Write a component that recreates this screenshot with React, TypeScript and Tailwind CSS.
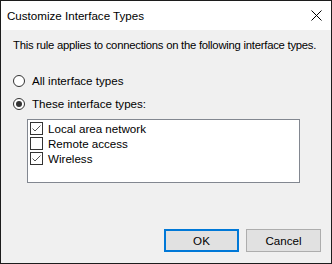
import React from 'react'

const font = { fontFamily: '"Liberation Sans", Arial, sans-serif' }

const items = [
  { label: 'Local area network', checked: true },
  { label: 'Remote access', checked: false },
  { label: 'Wireless', checked: true },
]

const Radio = ({ selected, label }: { selected?: boolean; label: string }) => (
  <div className="flex items-center h-[16px]">
    <span className="ml-[12px] w-[12px] h-[12px] rounded-full border border-[#333333] bg-white flex items-center justify-center">
      {selected && <span className="w-[6px] h-[6px] rounded-full bg-[#333333]" />}
    </span>
    <span className="ml-[7px]">{label}</span>
  </div>
)

const CheckRow = ({ checked, label }: { checked: boolean; label: string }) => (
  <div className="flex items-center h-[15px]">
    <span className="w-[13px] h-[13px] border border-[#333333] bg-white flex items-center justify-center">
      {checked && (
        <svg width="11" height="11" viewBox="0 0 11 11">
          <path d="M1.5 5.5 L4 8 L9.5 2.5" fill="none" stroke="#555" strokeWidth="1" />
        </svg>
      )}
    </span>
    <span className="ml-[5px]">{label}</span>
  </div>
)

export default function App() {
  return (
    <div className="w-[332px] h-[264px] border border-[#1c1c1c] bg-[#f0f0f0] flex flex-col text-[11.6px] text-black" style={font}>
      <div className="h-[29px] bg-white flex items-center justify-between pl-[6px] pr-[9px]">
        <span>Customize Interface Types</span>
        <svg width="11" height="11" viewBox="0 0 11 11">
          <path d="M0.5 0.5 L10.5 10.5 M10.5 0.5 L0.5 10.5" stroke="#000" strokeWidth="1" />
        </svg>
      </div>

      <div className="flex flex-col flex-1">
        <p className="mt-[7px] ml-[12px] leading-[16px] whitespace-nowrap text-[11.3px] tracking-[-0.25px]">This rule applies to connections on the following interface types.</p>

        <div className="mt-[20px] flex flex-col gap-[7px]">
          <Radio label="All interface types" />
          <Radio selected label="These interface types:" />
        </div>

        <div className="mt-[7px] ml-[26px] w-[273px] h-[64px] border border-[#828790] bg-white pl-[2px] pt-[1px]">
          {items.map((it) => (
            <CheckRow key={it.label} checked={it.checked} label={it.label} />
          ))}
        </div>

        <div className="mt-auto mb-[11px] flex justify-end gap-[7px] pr-[10px]">
          <button className="w-[75px] h-[23px] bg-[#e1e1e1] border-2 border-[#0078d7]">OK</button>
          <button className="w-[75px] h-[23px] bg-[#e1e1e1] border border-[#adadad]">Cancel</button>
        </div>
      </div>
    </div>
  )
}
